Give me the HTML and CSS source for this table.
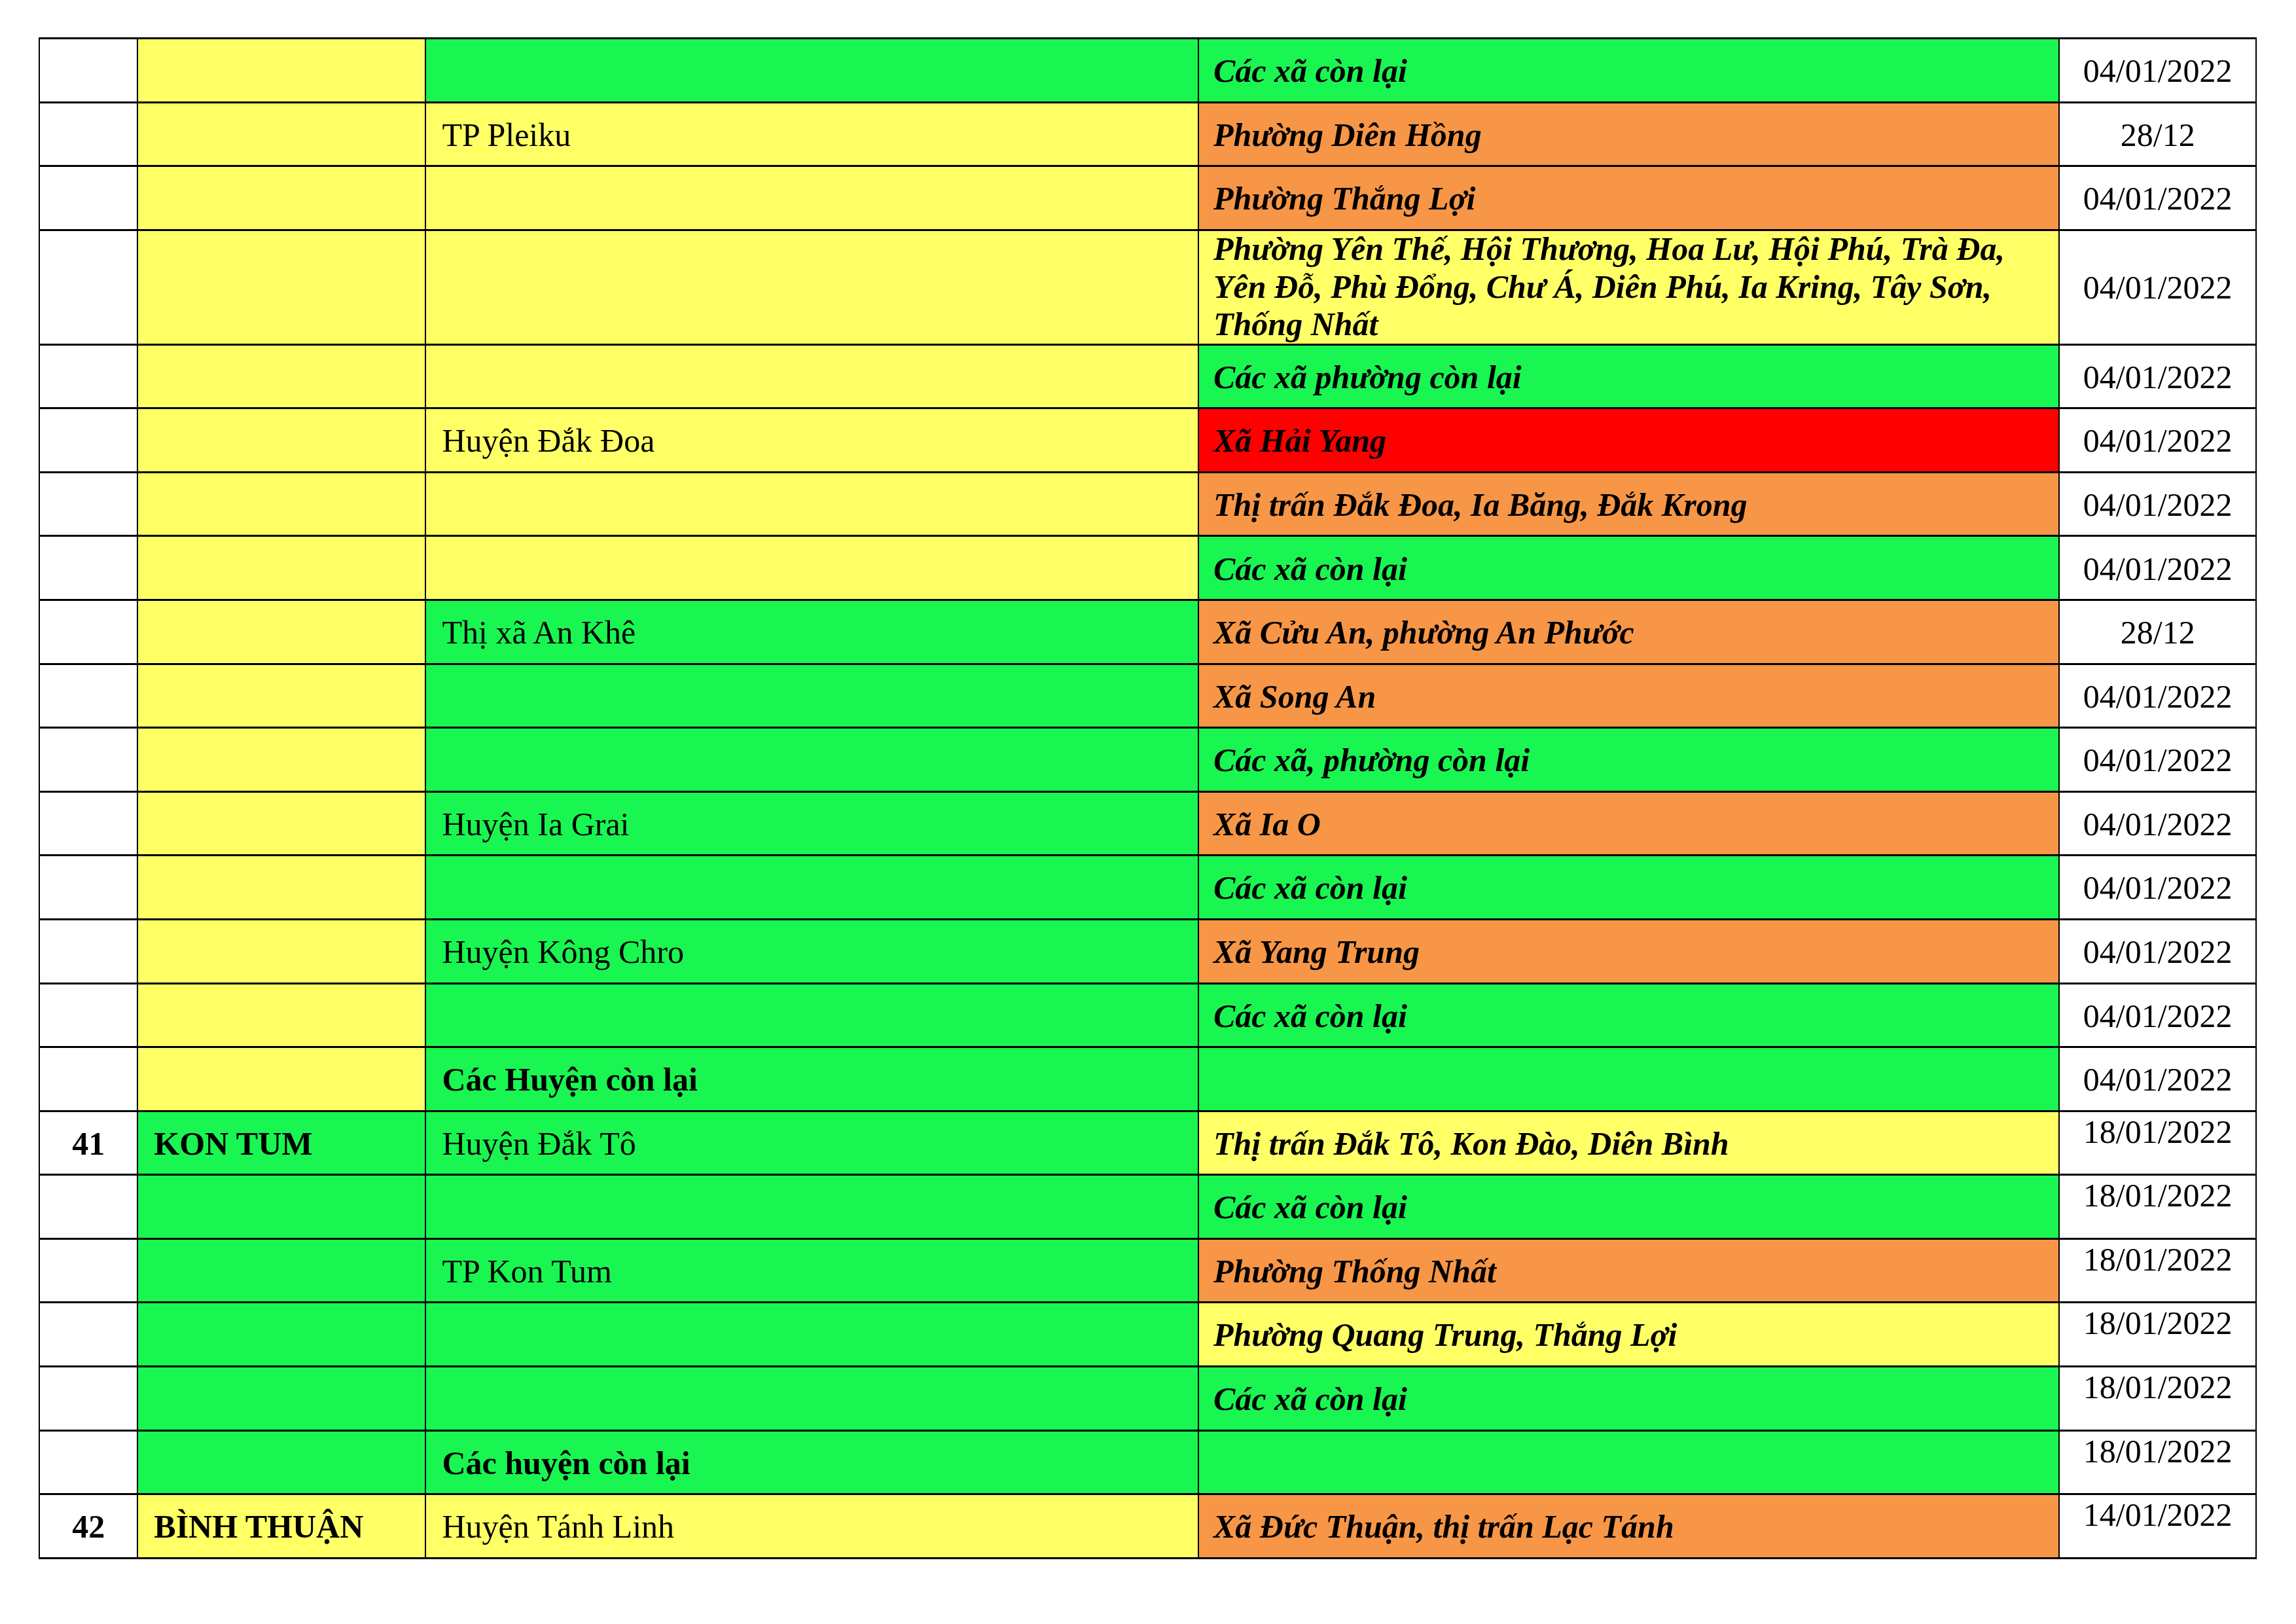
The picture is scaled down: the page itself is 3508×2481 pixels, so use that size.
FILE: index.html
```html
<!DOCTYPE html>
<html lang="vi">
<head>
<meta charset="utf-8">
<title>Danh sách cấp độ dịch</title>
<link rel="stylesheet" href="styles.css">
</head>
<body>
<div class="page">
  <div class="sheet">
    <!-- 1 -->
    <div class="cell num"></div>
    <div class="cell prov bg-y"></div>
    <div class="cell dist bg-g"></div>
    <div class="cell ward bg-g">Các xã còn lại</div>
    <div class="cell date">04/01/2022</div>
    <!-- 2 -->
    <div class="cell num"></div>
    <div class="cell prov bg-y"></div>
    <div class="cell dist bg-y">TP Pleiku</div>
    <div class="cell ward bg-o">Phường Diên Hồng</div>
    <div class="cell date">28/12</div>
    <!-- 3 -->
    <div class="cell num"></div>
    <div class="cell prov bg-y"></div>
    <div class="cell dist bg-y"></div>
    <div class="cell ward bg-o">Phường Thắng Lợi</div>
    <div class="cell date">04/01/2022</div>
    <!-- 4 -->
    <div class="cell num"></div>
    <div class="cell prov bg-y"></div>
    <div class="cell dist bg-y"></div>
    <div class="cell ward multi bg-y">Phường Yên Thế, Hội Thương, Hoa Lư, Hội Phú, Trà Đa, Yên Đỗ, Phù Đổng, Chư Á, Diên Phú, Ia Kring, Tây Sơn, Thống Nhất</div>
    <div class="cell date">04/01/2022</div>
    <!-- 5 -->
    <div class="cell num"></div>
    <div class="cell prov bg-y"></div>
    <div class="cell dist bg-y"></div>
    <div class="cell ward bg-g">Các xã phường còn lại</div>
    <div class="cell date">04/01/2022</div>
    <!-- 6 -->
    <div class="cell num"></div>
    <div class="cell prov bg-y"></div>
    <div class="cell dist bg-y">Huyện Đắk Đoa</div>
    <div class="cell ward bg-r">Xã Hải Yang</div>
    <div class="cell date">04/01/2022</div>
    <!-- 7 -->
    <div class="cell num"></div>
    <div class="cell prov bg-y"></div>
    <div class="cell dist bg-y"></div>
    <div class="cell ward bg-o">Thị trấn Đắk Đoa, Ia Băng, Đắk Krong</div>
    <div class="cell date">04/01/2022</div>
    <!-- 8 -->
    <div class="cell num"></div>
    <div class="cell prov bg-y"></div>
    <div class="cell dist bg-y"></div>
    <div class="cell ward bg-g">Các xã còn lại</div>
    <div class="cell date">04/01/2022</div>
    <!-- 9 -->
    <div class="cell num"></div>
    <div class="cell prov bg-y"></div>
    <div class="cell dist bg-g">Thị xã An Khê</div>
    <div class="cell ward bg-o">Xã Cửu An, phường An Phước</div>
    <div class="cell date">28/12</div>
    <!-- 10 -->
    <div class="cell num"></div>
    <div class="cell prov bg-y"></div>
    <div class="cell dist bg-g"></div>
    <div class="cell ward bg-o">Xã Song An</div>
    <div class="cell date">04/01/2022</div>
    <!-- 11 -->
    <div class="cell num"></div>
    <div class="cell prov bg-y"></div>
    <div class="cell dist bg-g"></div>
    <div class="cell ward bg-g">Các xã, phường còn lại</div>
    <div class="cell date">04/01/2022</div>
    <!-- 12 -->
    <div class="cell num"></div>
    <div class="cell prov bg-y"></div>
    <div class="cell dist bg-g">Huyện Ia Grai</div>
    <div class="cell ward bg-o">Xã Ia O</div>
    <div class="cell date">04/01/2022</div>
    <!-- 13 -->
    <div class="cell num"></div>
    <div class="cell prov bg-y"></div>
    <div class="cell dist bg-g"></div>
    <div class="cell ward bg-g">Các xã còn lại</div>
    <div class="cell date">04/01/2022</div>
    <!-- 14 -->
    <div class="cell num"></div>
    <div class="cell prov bg-y"></div>
    <div class="cell dist bg-g">Huyện Kông Chro</div>
    <div class="cell ward bg-o">Xã Yang Trung</div>
    <div class="cell date">04/01/2022</div>
    <!-- 15 -->
    <div class="cell num"></div>
    <div class="cell prov bg-y"></div>
    <div class="cell dist bg-g"></div>
    <div class="cell ward bg-g">Các xã còn lại</div>
    <div class="cell date">04/01/2022</div>
    <!-- 16 -->
    <div class="cell num"></div>
    <div class="cell prov bg-y"></div>
    <div class="cell dist bg-g strong">Các Huyện còn lại</div>
    <div class="cell ward bg-g"></div>
    <div class="cell date">04/01/2022</div>
    <!-- 17 -->
    <div class="cell num">41</div>
    <div class="cell prov bg-g">KON TUM</div>
    <div class="cell dist bg-g">Huyện Đắk Tô</div>
    <div class="cell ward bg-y">Thị trấn Đắk Tô, Kon Đào, Diên Bình</div>
    <div class="cell date top">18/01/2022</div>
    <!-- 18 -->
    <div class="cell num"></div>
    <div class="cell prov bg-g"></div>
    <div class="cell dist bg-g"></div>
    <div class="cell ward bg-g">Các xã còn lại</div>
    <div class="cell date top">18/01/2022</div>
    <!-- 19 -->
    <div class="cell num"></div>
    <div class="cell prov bg-g"></div>
    <div class="cell dist bg-g">TP Kon Tum</div>
    <div class="cell ward bg-o">Phường Thống Nhất</div>
    <div class="cell date top">18/01/2022</div>
    <!-- 20 -->
    <div class="cell num"></div>
    <div class="cell prov bg-g"></div>
    <div class="cell dist bg-g"></div>
    <div class="cell ward bg-y">Phường Quang Trung, Thắng Lợi</div>
    <div class="cell date top">18/01/2022</div>
    <!-- 21 -->
    <div class="cell num"></div>
    <div class="cell prov bg-g"></div>
    <div class="cell dist bg-g"></div>
    <div class="cell ward bg-g">Các xã còn lại</div>
    <div class="cell date top">18/01/2022</div>
    <!-- 22 -->
    <div class="cell num"></div>
    <div class="cell prov bg-g"></div>
    <div class="cell dist bg-g strong">Các huyện còn lại</div>
    <div class="cell ward bg-g"></div>
    <div class="cell date top">18/01/2022</div>
    <!-- 23 -->
    <div class="cell num">42</div>
    <div class="cell prov bg-y">BÌNH THUẬN</div>
    <div class="cell dist bg-y">Huyện Tánh Linh</div>
    <div class="cell ward bg-o">Xã Đức Thuận, thị trấn Lạc Tánh</div>
    <div class="cell date top">14/01/2022</div>
  </div>
</div>
</body>
</html>
```

FILE: styles.css
```css
html, body {
  margin: 0;
  padding: 0;
  background: #ffffff;
}

.page {
  padding: 57px 0 0 59.3px;
  font-family: "Liberation Serif", "Times New Roman", serif;
  font-size: 50px;
  line-height: 57.5px;
  color: #000;
}

.sheet {
  display: grid;
  width: max-content;
  grid-template-columns: 148px 438.2px 1178.5px 1313px 299.5px;
  grid-template-rows: 94.58px 94.58px 94.58px 172px;
  grid-auto-rows: 94.58px;
  gap: 3px 2px;
  padding: 3px 2px;
  background: #000;
}

.cell {
  display: flex;
  align-items: center;
  padding-top: 3px;
  background: #ffffff;
  white-space: normal;
  overflow: hidden;
}

.num {
  justify-content: center;
  font-weight: bold;
}

.prov {
  padding-left: 24px;
  font-weight: bold;
}

.dist {
  padding-left: 24px;
}

.dist.strong {
  font-weight: bold;
}

.ward {
  padding-left: 22px;
  padding-right: 20px;
  font-weight: bold;
  font-style: italic;
}

.ward.multi {
  padding-top: 0;
}

.date {
  justify-content: center;
}

.date.top {
  align-items: flex-start;
  padding-top: 2px;
}

.bg-y { background: #ffff66; }
.bg-g { background: #19f551; }
.bg-o { background: #f79646; }
.bg-r { background: #ff0000; }
```
